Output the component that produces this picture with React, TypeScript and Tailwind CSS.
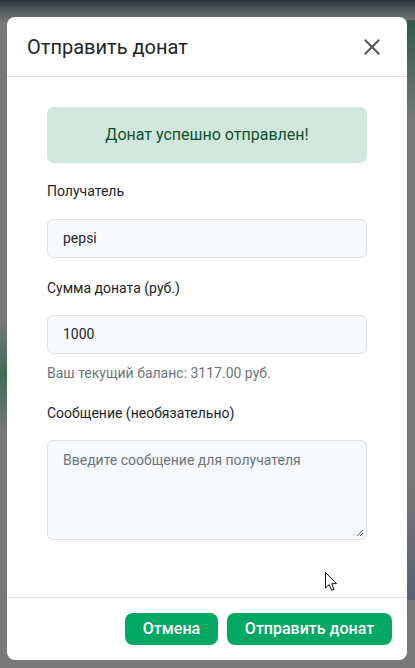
import React from "react";

function CloseIcon() {
  return (
    <svg width="16" height="16" viewBox="0 0 16 16" fill="none">
      <path d="M1.5 1.5L14.5 14.5M14.5 1.5L1.5 14.5" stroke="#555" strokeWidth="2" strokeLinecap="square" />
    </svg>
  );
}

function Cursor() {
  return (
    <svg width="13" height="20" viewBox="0 0 13 20" className="absolute left-[325px] top-[572px]">
      <path d="M0.5 0.5 L0.5 16 L4.2 12.5 L6.6 18.3 L9 17.3 L6.7 11.7 L11.6 11.7 Z" fill="#fff" stroke="#111" strokeWidth="1" strokeLinejoin="round" />
    </svg>
  );
}

export default function App() {
  return (
    <div
      className="relative w-[415px] h-[668px] overflow-hidden bg-[#787878] pt-[17px] px-[7px]"
      style={{ fontFamily: "Roboto, 'Liberation Sans', sans-serif" }}
    >
      <div className="absolute inset-0 bg-[linear-gradient(to_bottom,#28343a_0px,#4a5256_8px,#787878_22px,#787878_100%)]" />
      <div className="absolute left-0 top-[320px] w-[8px] h-[110px] bg-[linear-gradient(to_bottom,#787878,#3f6b57,#787878)]" />
      <div className="absolute right-0 top-[480px] w-[8px] h-[120px] bg-[linear-gradient(to_bottom,#787878,#5c6072)]" />
      <div className="absolute right-0 top-[20px] w-[8px] h-[100px] bg-[linear-gradient(to_bottom,#2f5a48,#787878)]" />

      <div className="relative w-[400px] h-[643px] bg-white rounded-[8px] flex flex-col">
        <div className="h-[60px] flex items-center justify-between pl-5 pr-[27px] border-b border-[#dee2e6]">
          <div className="text-[20px] leading-[30px] text-[#212529]">Отправить донат</div>
          <CloseIcon />
        </div>

        <div className="flex flex-col px-10 pt-[30px] h-[520px]">
          <div className="h-[56px] rounded-[7px] bg-[#d1e7dd] text-[#0f5132] flex items-center justify-center text-[16px]">
            Донат успешно отправлен!
          </div>

          <div className="mt-[18px] text-[14px] leading-[20px] text-[#212529]">Получатель</div>
          <div className="mt-[18px] h-[39px] rounded-[6px] border border-[#dee2e6] bg-[#f8f9fa] flex items-center px-[15px] text-[14px] text-[#212529]">
            pepsi
          </div>

          <div className="mt-[20px] text-[14px] leading-[20px] text-[#212529]">Сумма доната (руб.)</div>
          <div className="mt-[17px] h-[39px] rounded-[6px] border border-[#dee2e6] bg-[#f8f9fa] flex items-center px-[15px] text-[14px] text-[#212529]">
            1000
          </div>
          <div className="mt-[9px] text-[14px] leading-[20px] text-[#6c757d]">Ваш текущий баланс: 3117.00 руб.</div>

          <div className="mt-[20px] text-[14px] leading-[20px] text-[#212529]">Сообщение (необязательно)</div>
          <div className="relative mt-[17px] h-[100px] rounded-[6px] border border-[#dee2e6] bg-[#f8f9fa] px-[15px] pt-[9px] text-[14px] leading-[20px] text-[#6c757d]">
            Введите сообщение для получателя
            <svg width="8" height="8" viewBox="0 0 8 8" className="absolute right-[2px] bottom-[2px]">
              <path d="M7 1L1 7M7 4L4 7" stroke="#666" strokeWidth="1" />
            </svg>
          </div>
        </div>

        <div className="border-t border-[#dee2e6] flex justify-end gap-[9px] pt-[15px] pr-[15px]">
          <div className="h-[32px] w-[93px] rounded-[8px] bg-[#03a862] text-white text-[16px] font-medium flex items-center justify-center">
            Отмена
          </div>
          <div className="h-[32px] w-[165px] rounded-[8px] bg-[#03a862] text-white text-[16px] font-medium flex items-center justify-center">
            Отправить донат
          </div>
        </div>
      </div>
      <Cursor />
    </div>
  );
}
